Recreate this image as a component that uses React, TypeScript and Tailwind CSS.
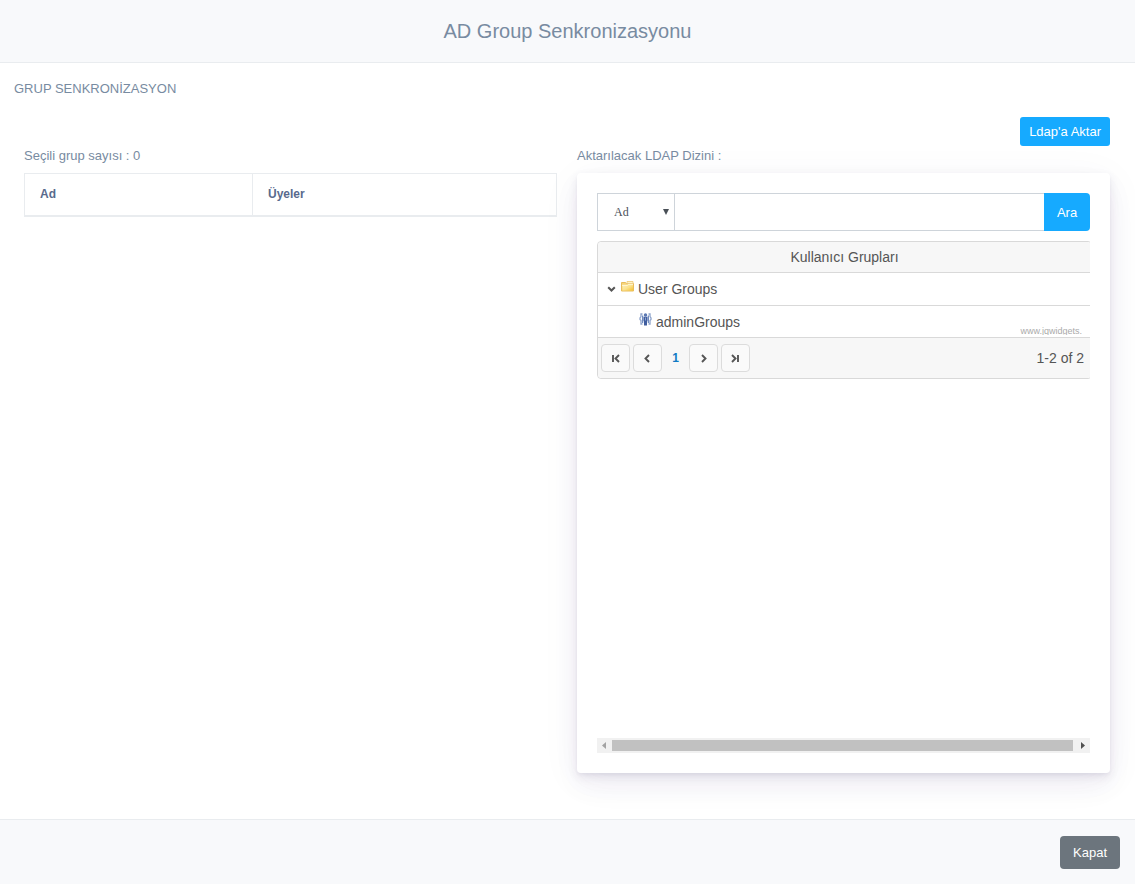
import React from 'react';

const cardShadow =
  'shadow-[0_7px_42px_rgba(52,44,110,0.05),0_12px_26px_rgba(52,44,110,0.05),0_4px_10px_rgba(52,44,90,0.09),0_2px_3px_rgba(52,44,90,0.04)]';

function FolderIcon() {
  return (
    <svg width="13" height="11" viewBox="0 0 13 11" aria-hidden="true">
      <defs>
        <linearGradient id="folder" x1="0" y1="0" x2="1" y2="1">
          <stop offset="0" stopColor="#fdf1be" />
          <stop offset="0.55" stopColor="#fbe18b" />
          <stop offset="1" stopColor="#f4c12f" />
        </linearGradient>
      </defs>
      <path d="M0.5 1.5h4l1 1h7v7.5h-12z" fill="#f7d478" stroke="#e8bd5c" />
      <path d="M6 0.5h6v2H6z" fill="#fff3c9" stroke="#edc873" strokeWidth="0.8" />
      <path d="M1.5 4h5l1-1h4.500v6.500h-10.500z" fill="url(#folder)" />
      <path d="M1 4.300h5.500l1-1h4.500" fill="none" stroke="#fffbe8" strokeWidth="0.8" />
    </svg>
  );
}

function GroupIcon() {
  return (
    <svg width="13" height="13" viewBox="0 0 13 13" aria-hidden="true">
      <g fill="none" stroke="#8da3cb" strokeWidth="1.300">
        <path d="M3.500 1H2v2.500L1 5v1.500l1 1V11h1.500M9.500 1H11v2.500l1 1.500v1.500l-1 1V11H9.500" />
      </g>
      <path d="M3 2.500h1.200v7.500H3zM8.800 2.500H10v7.500H8.800z" fill="#6f8bc0" />
      <circle cx="6.500" cy="2" r="1.700" fill="#5b78b2" />
      <path d="M4.500 3.700h4v4.600H8v4.200H5V8.300h-.5z" fill="#3f5d9e" />
      <path d="M6 4.500h1v3H6z" fill="#8ea6d4" />
    </svg>
  );
}

const glyphs = {
  first: 'M2 1v7M8 1L4.500 4.500L8 8',
  prev: 'M6 1L2.500 4.500L6 8',
  next: 'M3 1L6.500 4.500L3 8',
  last: 'M7 1v7M1 1L4.500 4.500L1 8',
};

function PagerButton({ label, glyph }: { label: string; glyph: string }) {
  return (
    <button
      type="button"
      aria-label={label}
      className="flex h-[28px] w-[29px] items-center justify-center rounded-[4px] border border-[#dcdcdc] bg-[#fafafa]"
    >
      <svg width="9" height="9" viewBox="0 0 9 9" fill="none" stroke="#555" strokeWidth="1.900" aria-hidden="true">
        <path d={glyph} />
      </svg>
    </button>
  );
}

function GroupTree() {
  return (
    <div className="overflow-hidden">
      <div className="w-[calc(100%+2px)] rounded-[4px] border border-[#d9d9d9] text-sm text-[#555]">
        <table className="w-full border-collapse">
          <thead>
            <tr>
              <th className="h-[30px] rounded-t-[4px] bg-[#f7f7f7] p-0 font-normal">Kullanıcı Grupları</th>
            </tr>
          </thead>
          <tbody>
            <tr className="border-t border-[#d9d9d9]">
              <td className="h-[33px] p-0">
                <div className="flex items-center pl-[9px]">
                  <button type="button" aria-label="Daralt" className="mr-[5px]">
                    <svg width="9" height="8" viewBox="0 0 9 8" fill="none" stroke="#555" strokeWidth="2" aria-hidden="true">
                      <path d="M1.200 2.200L4.500 5.500L7.800 2.200" />
                    </svg>
                  </button>
                  <span className="mr-1 pb-1">
                    <FolderIcon />
                  </span>
                  User Groups
                </div>
              </td>
            </tr>
            <tr className="border-t border-[#d9d9d9]">
              <td className="h-[32px] p-0">
                <div className="relative flex items-center pt-[2px] pl-[41px]">
                  <span className="mr-1 pb-[6px]">
                    <GroupIcon />
                  </span>
                  adminGroups
                  <a
                    href="#"
                    className="absolute right-[9px] bottom-[-3px] h-[10px] overflow-hidden text-[9px] leading-[12px] text-[#aaa]"
                  >
                    www.jqwidgets.
                  </a>
                </div>
              </td>
            </tr>
          </tbody>
        </table>
        <div className="flex h-[41px] items-center justify-between rounded-b-[4px] border-t border-[#d9d9d9] bg-[#f7f7f7] pr-[7px] pl-[3px]">
          <div className="flex items-center gap-[3px]">
            <PagerButton label="İlk sayfa" glyph={glyphs.first} />
            <PagerButton label="Önceki sayfa" glyph={glyphs.prev} />
            <a href="#" className="w-[21px] text-center text-xs font-bold text-[#0f7bc4]">
              1
            </a>
            <PagerButton label="Sonraki sayfa" glyph={glyphs.next} />
            <PagerButton label="Son sayfa" glyph={glyphs.last} />
          </div>
          <span>1-2 of 2</span>
        </div>
      </div>
    </div>
  );
}

function HorizontalScrollbar() {
  return (
    <div className="flex h-[15px] items-center bg-[#f1f1f1]">
      <button type="button" aria-label="Sola kaydır" className="w-[15px] shrink-0 pl-[5px]">
        <svg className="block" width="4" height="7" viewBox="0 0 4 7" aria-hidden="true">
          <path d="M4 0v7L0 3.500z" fill="#a3a3a3" />
        </svg>
      </button>
      <div className="h-[11px] flex-1 bg-[#c1c1c1]" />
      <button type="button" aria-label="Sağa kaydır" className="w-[17px] shrink-0 pl-2">
        <svg className="block" width="4" height="7" viewBox="0 0 4 7" aria-hidden="true">
          <path d="M0 0v7L4 3.500z" fill="#505050" />
        </svg>
      </button>
    </div>
  );
}

export default function App() {
  return (
    <div className="flex min-h-screen flex-col bg-white font-['Liberation_Sans',Arial,sans-serif] text-[13px] leading-5 text-[#788ba1]">
      <header className="flex h-[63px] shrink-0 items-center justify-center border-b border-[#e9ecef] bg-[#f8f9fb]">
        <h1 className="text-xl leading-[30px]">AD Group Senkronizasyonu</h1>
      </header>

      <main className="flex-1 px-[14px] pt-4 pb-[46px]">
        <h2>GRUP SENKRONİZASYON</h2>
        <div className="mt-[18px] pr-[11px] pl-[10px]">
          <div className="flex justify-end">
            <button type="button" className="h-[29px] rounded-[3px] bg-[#16aaff] px-[9px] text-white">
              Ldap'a Aktar
            </button>
          </div>
          <div className="grid grid-cols-2 gap-5">
            <section>
              <p className="mb-[7px]">Seçili grup sayısı : 0</p>
              <table className="w-full table-fixed border-collapse border border-[#e9ecef] text-left text-xs text-[#596a8d]">
                <thead>
                  <tr className="border-b-2 border-[#e9ecef]">
                    <th className="h-[42px] w-[228px] border-r border-[#e9ecef] px-[15px] py-0">Ad</th>
                    <th className="px-[15px] py-0">Üyeler</th>
                  </tr>
                </thead>
              </table>
            </section>

            <section>
              <p className="mb-[7px]">Aktarılacak LDAP Dizini :</p>
              <div className={`flex h-[600px] flex-col rounded-[4px] bg-white p-5 ${cardShadow}`}>
                <form className="mb-[10px] flex h-[38px]" onSubmit={(e) => e.preventDefault()}>
                  <div className="relative w-[78px] shrink-0">
                    <select
                      aria-label="Arama alanı"
                      className="h-full w-full appearance-none border border-[#ced4da] bg-white pl-4 font-['Liberation_Serif',serif] text-xs text-[#495057]"
                    >
                      <option>Ad</option>
                    </select>
                    <svg className="pointer-events-none absolute top-4 right-[6px]" width="6" height="6" viewBox="0 0 6 6" aria-hidden="true">
                      <path d="M0 0h6L3 6z" fill="#495057" />
                    </svg>
                  </div>
                  <input
                    type="text"
                    aria-label="Arama metni"
                    className="min-w-0 flex-1 border-y border-[#ced4da] bg-white px-3 outline-none"
                  />
                  <button type="submit" className="w-[46px] shrink-0 rounded-r-[4px] bg-[#16aaff] pt-[2px] text-white">
                    Ara
                  </button>
                </form>
                <div className="flex-1">
                  <GroupTree />
                </div>
                <HorizontalScrollbar />
              </div>
            </section>
          </div>
        </div>
      </main>

      <footer className="flex h-[65px] shrink-0 items-center justify-end border-t border-[#e9ecef] bg-[#f8f9fb] px-[15px]">
        <button type="button" className="h-[33px] rounded-[4px] bg-[#6c757d] px-[13px] pt-[2px] text-white">
          Kapat
        </button>
      </footer>
    </div>
  );
}
